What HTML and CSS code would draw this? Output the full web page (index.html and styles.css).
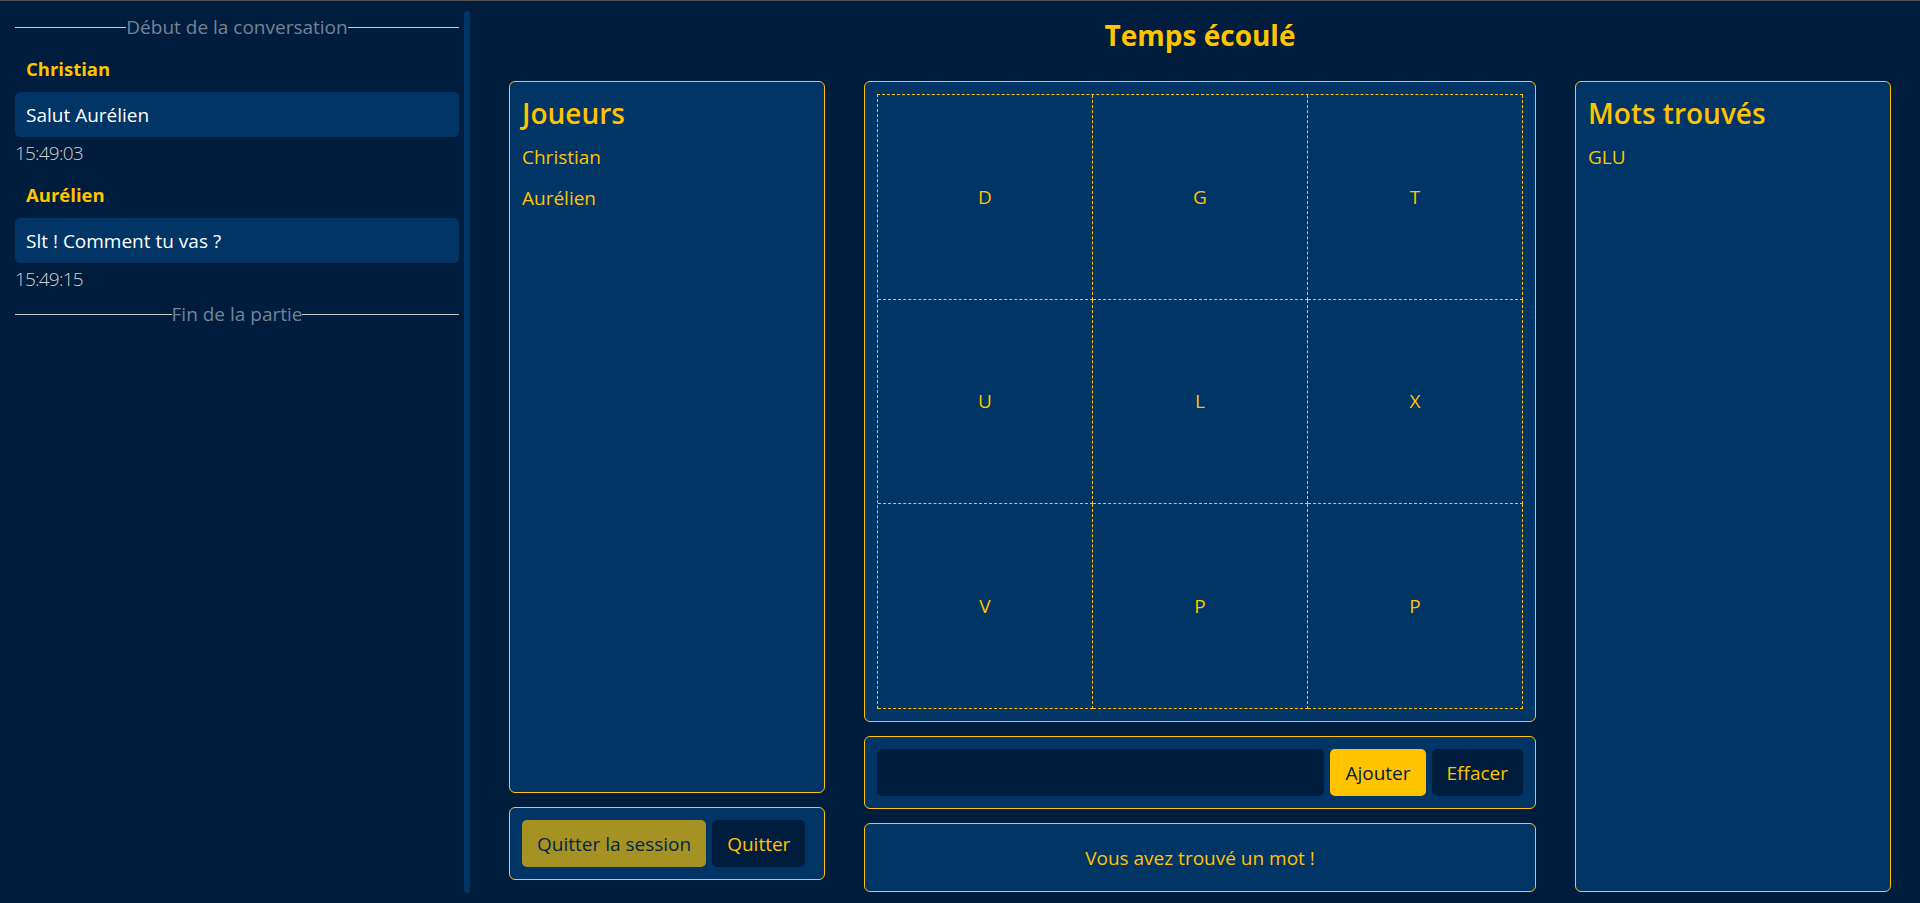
FILE: index.html
```html
<!DOCTYPE html>
<html lang="fr">
<head>
  <meta charset="UTF-8" />
  <meta name="viewport" content="width=device-width, initial-scale=1.0"/>
  <title>Boggle - Partie</title>
  <link rel="stylesheet" href="styles.css">
</head>
<body>
  <div class="page">
    <aside class="chat">
      <div class="chat-divider"><span>Début de la conversation</span></div>
      <div class="message">
        <div class="message-author">Christian</div>
        <div class="message-bubble">Salut Aurélien</div>
        <div class="message-time">15:49:03</div>
      </div>
      <div class="message">
        <div class="message-author">Aurélien</div>
        <div class="message-bubble">Slt ! Comment tu vas ?</div>
        <div class="message-time">15:49:15</div>
      </div>
      <div class="chat-divider end"><span>Fin de la partie</span></div>
    </aside>
    <div class="chat-scroll"></div>

    <main class="game">
      <h1 class="timer">Temps écoulé</h1>
      <div class="game-grid">
        <div class="column left">
          <section class="card players">
            <h2>Joueurs</h2>
            <ul class="list">
              <li>Christian</li>
              <li>Aurélien</li>
            </ul>
          </section>
          <section class="card actions">
            <button class="btn btn-yellow" disabled>Quitter la session</button>
            <button class="btn btn-dark">Quitter</button>
          </section>
        </div>

        <div class="column">
          <section class="card board-card">
            <div class="board" id="board"></div>
          </section>
          <section class="card word-form">
            <input type="text" class="word-input" id="word">
            <button class="btn btn-yellow">Ajouter</button>
            <button class="btn btn-dark">Effacer</button>
          </section>
          <section class="card notice">Vous avez trouvé un mot !</section>
        </div>

        <section class="card words">
          <h2>Mots trouvés</h2>
          <ul class="list">
            <li>GLU</li>
          </ul>
        </section>
      </div>
    </main>
  </div>

  <script>
    const letters = ['D', 'G', 'T', 'U', 'L', 'X', 'V', 'P', 'P'];
    const board = document.getElementById('board');

    letters.forEach(letter => {
      const cell = document.createElement('div');
      cell.className = 'cell';
      cell.textContent = letter;
      board.appendChild(cell);
    });
  </script>
</body>
</html>
```

FILE: styles.css
```css
* {
  box-sizing: border-box;
  font-family: 'Segoe UI', 'Open Sans', sans-serif;
}

html, body {
  height: 100%;
}

body {
  margin: 0;
  background: #001d3d;
  border-top: 1px solid #4f4f4f;
  color: #fff;
  font-size: 19px;
  line-height: 30px;
  overflow: hidden;
}

.page {
  display: flex;
  height: 100%;
}

/* chat */
.chat {
  width: 464px;
  padding: 11px 5px 0 15px;
}

.chat-scroll {
  width: 6px;
  margin: 10px 0;
  background: #003566;
  border-radius: 3px;
}

.chat-divider {
  display: flex;
  align-items: center;
  color: #74839a;
}

.chat-divider::before,
.chat-divider::after {
  content: "";
  flex: 1;
  border-top: 1px solid #c9c9c9;
}

.chat-divider.end {
  margin-top: 5px;
}

.message-author {
  margin: 12px 0 8px;
  padding-left: 11px;
  font-size: 18.5px;
  font-weight: 700;
  color: #ffc300;
}

.message-bubble {
  background: #003566;
  border-radius: 5px;
  padding: 7.5px 11px;
}

.message-time {
  margin-top: 1px;
  color: #d0d0d0;
  font-weight: 300;
  letter-spacing: -0.8px;
}

/* game */
.game {
  flex: 1;
  display: flex;
  flex-direction: column;
  padding: 0 29px 11px 39px;
}

.timer {
  margin: 0;
  padding: 17px 0 28px;
  font-size: 28px;
  line-height: 35px;
  font-weight: 700;
  text-align: center;
  color: #ffc300;
}

.game-grid {
  flex: 1;
  display: grid;
  grid-template-columns: 316px 672px 1fr;
  column-gap: 39px;
  min-height: 0;
}

.column {
  display: flex;
  flex-direction: column;
  gap: 14px;
}

.column.left {
  padding-bottom: 12px;
}

.card {
  background: #003566;
  border: 1px solid #ffc300;
  border-radius: 6px;
  padding: 12px;
  color: #ffc300;
}

.card h2 {
  margin: 0 0 11px;
  padding-top: 3px;
  font-size: 28px;
  line-height: 1.2;
  font-weight: 600;
}

.list {
  list-style: none;
  margin: 0;
  padding: 0;
  display: flex;
  flex-direction: column;
  gap: 11px;
}

.players {
  flex: 1;
}

.actions {
  display: flex;
  gap: 6px;
}

.btn {
  font-size: inherit;
  line-height: 30px;
  padding: 7.5px 14px;
  border: 1px solid transparent;
  border-radius: 5px;
  white-space: nowrap;
  cursor: pointer;
}

.btn-yellow {
  background: #ffc300;
  color: #001d3d;
}

.btn-yellow:disabled {
  opacity: 0.65;
  cursor: default;
}

.btn-dark {
  background: #001d3d;
  color: #ffc300;
}

/* letter board */
.board-card {
  flex: 1;
  display: flex;
}

.board {
  flex: 1;
  display: grid;
  grid-template-columns: repeat(3, 1fr);
  grid-template-rows: repeat(3, 1fr);
  border-top: 1px dashed #ffc300;
  border-left: 1px dashed #ffc300;
}

.cell {
  display: flex;
  justify-content: center;
  align-items: center;
  border-right: 1px dashed #ffc300;
  border-bottom: 1px dashed #ffc300;
  color: #ffc300;
}

.word-form {
  display: flex;
  gap: 6px;
}

.word-input {
  flex: 1;
  min-width: 0;
  height: 47px;
  background: #001d3d;
  border: none;
  border-radius: 5px;
  padding: 0 16px;
  font-size: inherit;
  color: #ffc300;
}

.notice {
  height: 69px;
  display: flex;
  justify-content: center;
  align-items: center;
}
```
